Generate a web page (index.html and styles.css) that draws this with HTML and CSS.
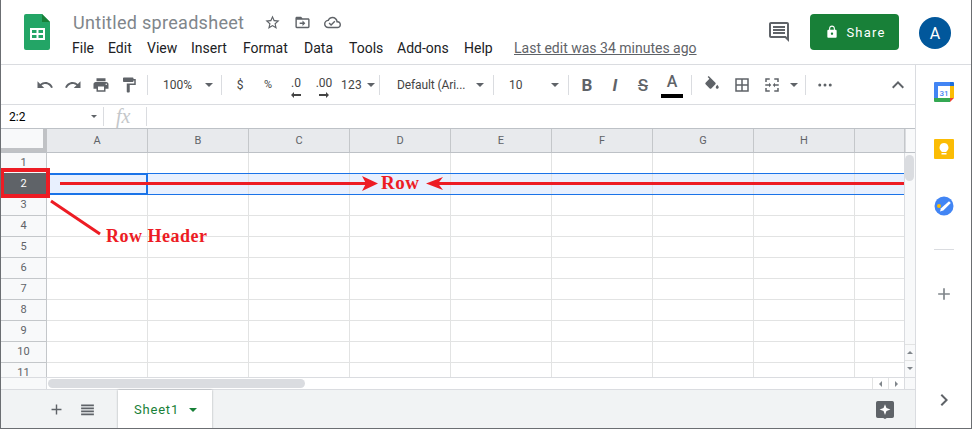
FILE: index.html
```html
<!DOCTYPE html>
<html>
<head>
    <meta charset="UTF-8">
    <title>Untitled spreadsheet</title>
    <link rel="stylesheet" href="styles.css">
</head>
<body>
<div class="app">
    <header class="header">
        <svg class="logo" viewBox="0 0 26 36"><path fill="#23a566" d="M2 0h16l8 8v26a2 2 0 0 1-2 2H2a2 2 0 0 1-2-2V2a2 2 0 0 1 2-2z"/><path fill="#188038" d="M18 0l8 8h-8z"/><path fill="#fff" d="M6 14h15v12H6zm2 2v3h4.500v-3zm6.500 0v3H19v-3zM8 21v3h4.500v-3zm6.500 0v3H19v-3z" fill-rule="evenodd"/></svg>
        <div class="doc">
            <div class="title-row">
                <span class="title">Untitled spreadsheet</span>
                <svg class="title-icon first" viewBox="0 0 24 24"><path d="M22 9.240l-7.190-.620L12 2 9.190 8.630 2 9.240l5.460 4.730L5.820 21 12 17.270 18.180 21l-1.630-7.030L22 9.240zM12 15.400l-3.760 2.270 1-4.280-3.320-2.880 4.380-.380L12 6.100l1.710 4.040 4.380.380-3.320 2.880 1 4.280L12 15.400z"/></svg>
                <svg class="title-icon" viewBox="0 0 24 24"><path d="M20 6h-8l-2-2H4c-1.100 0-2 .9-2 2v12c0 1.100.9 2 2 2h16c1.100 0 2-.9 2-2V8c0-1.100-.9-2-2-2zm0 12H4V8h16v10zm-8-1l4-4-4-4v3H8v2h4v3z"/></svg>
                <svg class="title-icon" viewBox="0 0 24 24"><path d="M19.350 10.040C18.670 6.590 15.640 4 12 4 9.110 4 6.600 5.640 5.350 8.040 2.340 8.360 0 10.910 0 14c0 3.310 2.690 6 6 6h13c2.760 0 5-2.240 5-5 0-2.640-2.050-4.780-4.650-4.960zM19 18H6c-2.210 0-4-1.790-4-4s1.790-4 4-4h.71C7.370 7.690 9.480 6 12 6c3.040 0 5.500 2.460 5.500 5.500v.5H19c1.660 0 3 1.340 3 3s-1.340 3-3 3zm-9-3.820l-2.090-2.090L6.500 13.500 10 17l6.010-6.010-1.410-1.410z"/></svg>
            </div>
            <nav class="menu">
                <span>File</span><span>Edit</span><span>View</span><span>Insert</span><span>Format</span><span>Data</span><span>Tools</span><span>Add-ons</span><span>Help</span>
                <a class="last-edit">Last edit was 34 minutes ago</a>
            </nav>
        </div>
        <svg class="comment" viewBox="0 0 24 24"><path d="M21.990 4c0-1.100-.89-2-1.990-2H4c-1.100 0-2 .9-2 2v12c0 1.100.9 2 2 2h14l4 4-.01-18zM20 4v13.170L18.830 16H4V4h16zM6 12h12v2H6zm0-3h12v2H6zm0-3h12v2H6z"/></svg>
        <button class="share">
            <svg viewBox="0 0 24 24"><path d="M18 8h-1V6c0-2.760-2.240-5-5-5S7 3.240 7 6v2H6c-1.100 0-2 .9-2 2v10c0 1.100.9 2 2 2h12c1.100 0 2-.9 2-2V10c0-1.100-.9-2-2-2zm-6 9c-1.100 0-2-.9-2-2s.9-2 2-2 2 .9 2 2-.9 2-2 2zm3.100-9H8.900V6c0-1.710 1.390-3.100 3.100-3.100 1.710 0 3.100 1.390 3.100 3.100v2z"/></svg>
            Share
        </button>
        <div class="avatar">A</div>
    </header>

    <div class="content">
        <main class="main">
            <div class="toolbar">
                <span class="tool"><svg viewBox="0 0 24 24"><path d="M12.500 8c-2.650 0-5.050.99-6.900 2.600L2 7v9h9l-3.620-3.620c1.390-1.160 3.160-1.880 5.120-1.880 3.540 0 6.550 2.310 7.600 5.500l2.370-.78C21.080 11.030 17.150 8 12.500 8z"/></svg></span>
                <span class="tool"><svg viewBox="0 0 24 24"><path d="M18.400 10.600C16.550 8.990 14.150 8 11.500 8c-4.650 0-8.580 3.030-9.960 7.220L3.900 16c1.050-3.190 4.050-5.500 7.600-5.500 1.950 0 3.730.72 5.120 1.880L13 16h9V7l-3.600 3.600z"/></svg></span>
                <span class="tool"><svg viewBox="0 0 24 24"><path d="M19 8H5c-1.660 0-3 1.340-3 3v6h4v4h12v-4h4v-6c0-1.660-1.340-3-3-3zm-3 11H8v-5h8v5zm3-7c-.55 0-1-.45-1-1s.45-1 1-1 1 .45 1 1-.45 1-1 1zm-1-9H6v4h12V3z"/></svg></span>
                <span class="tool"><svg viewBox="0 0 24 24"><path d="M18 4V3c0-.55-.45-1-1-1H5c-.55 0-1 .45-1 1v4c0 .55.45 1 1 1h12c.55 0 1-.45 1-1V6h1v4H9v11c0 .55.45 1 1 1h2c.55 0 1-.45 1-1v-9h8V4h-3z"/></svg></span>
                <span class="sep sep-first"></span>
                <span class="select select-zoom">100%<i class="caret"></i></span>
                <span class="sep"></span>
                <span class="tool tool-gap text">$</span>
                <span class="tool text small">%</span>
                <span class="tool text dec">.0<svg viewBox="0 0 10 6"><path d="M0 3l3-3v2h7v2H3v2z"/></svg></span>
                <span class="tool text dec">.00<svg viewBox="0 0 10 6"><path d="M10 3L7 0v2H0v2h7v2z"/></svg></span>
                <span class="select select-num">123<i class="caret"></i></span>
                <span class="sep"></span>
                <span class="select select-font">Default (Ari...<i class="caret"></i></span>
                <span class="sep"></span>
                <span class="select select-size">10<i class="caret"></i></span>
                <span class="sep"></span>
                <span class="tool glyph bold tool-gap">B</span>
                <span class="tool glyph italic">I</span>
                <span class="tool glyph strike">S</span>
                <span class="tool color">A<i class="swatch"></i></span>
                <span class="sep sep-wide"></span>
                <span class="tool"><svg viewBox="0 0 24 24"><path d="M16.560 8.940L7.620 0 6.210 1.410l2.380 2.380-5.150 5.150c-.59.59-.59 1.540 0 2.120l5.500 5.500c.29.29.68.44 1.060.44s.77-.15 1.060-.44l5.500-5.500c.59-.58.59-1.530 0-2.120zM19 11.500s-2 2.170-2 3.500c0 1.100.9 2 2 2s2-.9 2-2c0-1.330-2-3.500-2-3.500z"/></svg></span>
                <span class="tool tool-pair"><svg viewBox="0 0 24 24"><path d="M3 3v18h18V3H3zm8 16H5v-6h6v6zm0-8H5V5h6v6zm8 8h-6v-6h6v6zm0-8h-6V5h6v6z"/></svg></span>
                <span class="tool tool-pair"><svg viewBox="0 0 24 24"><path d="M3 3h6v2H5v3H3zm12 0h6v5h-2V5h-4zM3 16h2v3h4v2H3zm16 0h2v5h-6v-2h4zM3 11h5V9l3 3-3 3v-2H3zm18 0h-5V9l-3 3 3 3v-2h5z"/></svg></span>
                <i class="caret caret-merge"></i>
                <span class="sep sep-merge"></span>
                <span class="tool more"><svg viewBox="0 0 24 24"><circle cx="5" cy="12" r="2"/><circle cx="12" cy="12" r="2"/><circle cx="19" cy="12" r="2"/></svg></span>
                <span class="tool collapse"><svg viewBox="0 0 24 24"><path d="M12 8l-6 6 1.410 1.410L12 10.830l4.590 4.580L18 14z"/></svg></span>
            </div>

            <div class="formula">
                <div class="namebox">2:2<i class="caret caret-small"></i></div>
                <div class="fx">fx</div>
            </div>

            <div class="col-heads">
                <div class="corner"></div>
                <div class="col">A</div><div class="col">B</div><div class="col">C</div><div class="col">D</div><div class="col">E</div><div class="col">F</div><div class="col">G</div><div class="col">H</div><div class="col col-last"></div>
                <div class="scroll-corner"></div>
            </div>

            <div class="sheet">
                <div class="rows">
                    <div class="row"><div class="row-head">1</div><div class="cells"></div></div>
                    <div class="row row-selected"><div class="row-head">2</div><div class="cells"><div class="active-cell"></div></div></div>
                    <div class="row"><div class="row-head">3</div><div class="cells"></div></div>
                    <div class="row"><div class="row-head">4</div><div class="cells"></div></div>
                    <div class="row"><div class="row-head">5</div><div class="cells"></div></div>
                    <div class="row"><div class="row-head">6</div><div class="cells"></div></div>
                    <div class="row"><div class="row-head">7</div><div class="cells"></div></div>
                    <div class="row"><div class="row-head">8</div><div class="cells"></div></div>
                    <div class="row"><div class="row-head">9</div><div class="cells"></div></div>
                    <div class="row"><div class="row-head">10</div><div class="cells"></div></div>
                    <div class="row"><div class="row-head">11</div><div class="cells"></div></div>
                </div>
                <div class="vscroll">
                    <div class="vthumb"></div>
                    <div class="vbtn"><i class="tri tri-up"></i></div>
                    <div class="vbtn"><i class="tri tri-down"></i></div>
                </div>
            </div>

            <div class="hscroll">
                <div class="hscroll-head"></div>
                <div class="htrack"><div class="hthumb"></div></div>
                <div class="hbtn"><i class="tri tri-left"></i></div>
                <div class="hbtn"><i class="tri tri-right"></i></div>
                <div class="scroll-corner"></div>
            </div>

            <div class="tabs">
                <svg class="tab-icon add" viewBox="0 0 24 24"><path d="M19 13h-6v6h-2v-6H5v-2h6V5h2v6h6z"/></svg>
                <svg class="tab-icon list" viewBox="0 0 24 24"><path d="M3 5h18v2.400H3zm0 4.200h18v2.400H3zm0 4.200h18v2.400H3zm0 4.200h18V20H3z"/></svg>
                <div class="tab">Sheet1<i class="caret caret-green"></i></div>
                <svg class="explore" viewBox="0 0 20 20"><path fill="#5f6368" d="M2 0h16a2 2 0 0 1 2 2v15a2 2 0 0 1-2 2h-6l-2 1-2-1H2a2 2 0 0 1-2-2V2a2 2 0 0 1 2-2z"/><path fill="#fff" d="M10 3.500l1.600 4.400 4.400 1.600-4.400 1.600L10 15.500l-1.600-4.400L4 9.500l4.400-1.600z"/></svg>
            </div>
        </main>

        <aside class="side">
            <svg class="addon" viewBox="0 0 20 20"><path fill="#fff" d="M4 4h12v12H4z"/><path fill="#4285f4" d="M1 0h15v4H4v12H0V1a1 1 0 0 1 1-1z"/><path fill="#1e6fdc" d="M16 0h3a1 1 0 0 1 1 1v3h-4z"/><path fill="#fbbc04" d="M16 4h4v12h-4z"/><path fill="#34a853" d="M0 16h16v4H1a1 1 0 0 1-1-1z"/><path fill="#ea4335" d="M16 16h4l-4 4z"/><text class="cal-text" x="10" y="13.500">31</text></svg>
            <svg class="addon" viewBox="0 0 20 20"><path fill="#fbbc04" d="M1 0h18a1 1 0 0 1 1 1v18a1 1 0 0 1-1 1H1a1 1 0 0 1-1-1V1a1 1 0 0 1 1-1z"/><path fill="#fff" d="M10 4a4.500 4.500 0 0 1 2.500 8.200V13h-5v-.8A4.500 4.500 0 0 1 10 4zM7.500 14h5v1.500h-5z"/></svg>
            <svg class="addon" viewBox="0 0 20 20"><circle cx="10" cy="10" r="9.500" fill="#4285f4"/><path fill="#fff" d="M15 5.200l1.800 1.800-7.500 7.500-3.300 1 1-3.300z"/><circle cx="5" cy="10" r="2" fill="#fbbc04"/></svg>
            <div class="side-sep"></div>
            <svg class="side-add" viewBox="0 0 24 24"><path d="M19 13h-6v6h-2v-6H5v-2h6V5h2v6h6z"/></svg>
            <svg class="side-toggle" viewBox="0 0 24 24"><path d="M10 6L8.590 7.410 13.170 12l-4.580 4.590L10 18l6-6z"/></svg>
        </aside>
    </div>

    <!-- red annotations drawn on top of the screenshot -->
    <svg class="marks" viewBox="0 0 972 429">
        <rect x="2" y="170" width="46" height="26" fill="none" stroke="#ed1c24" stroke-width="4"/>
        <path fill="none" stroke="#ed1c24" stroke-width="3" d="M60 183.500H370M432 183.500H904M51 201L100 234"/>
        <path fill="#ed1c24" d="M362 176l16 7.500-16 7.500 4-7.500zM443 177l-17 6.500 17 6.500-5-6.500z"/>
    </svg>
    <span class="note note-row">Row</span>
    <span class="note note-header">Row Header</span>
</div>
</body>
</html>
```

FILE: styles.css
```css
* {
    box-sizing: border-box;
}

body {
    margin: 0;
    font-family: Roboto, Arial, sans-serif;
    background-color: #fff;
}

svg {
    display: block;
    fill: #5f6368;
}

.app {
    position: relative;
    width: 972px;
    height: 429px;
    overflow: hidden;
    display: flex;
    flex-direction: column;
    border-left: 1px solid #6b6e72;
    border-right: 1px solid #6b6e72;
    border-bottom: 1px solid #6b6e72;
}

/* header */
.header {
    height: 65px;
    flex: none;
    display: flex;
    align-items: flex-start;
    border-bottom: 1px solid #dadce0;
}

.logo {
    width: 26px;
    height: 36px;
    margin: 14px 0 0 23px;
    flex: none;
}

.doc {
    margin-left: 22px;
    width: 696px;
}

.title-row {
    display: flex;
    align-items: center;
    height: 22px;
    margin-top: 11px;
    margin-left: 1px;
}

.title {
    font-size: 18px;
    color: #80868b;
    width: 191px;
    letter-spacing: 0.3px;
}

.title-icon {
    width: 17px;
    height: 17px;
    margin-right: 13px;
}

.menu {
    display: flex;
    height: 18px;
    margin-top: 6px;
    font-size: 14px;
    line-height: 18px;
    color: #202124;
}

.menu span:nth-child(1) { width: 36px; }
.menu span:nth-child(2) { width: 39px; }
.menu span:nth-child(3) { width: 44px; }
.menu span:nth-child(4) { width: 52px; }
.menu span:nth-child(5) { width: 61px; }
.menu span:nth-child(6) { width: 45px; }
.menu span:nth-child(7) { width: 48px; }
.menu span:nth-child(8) { width: 67px; }
.menu span:nth-child(9) { width: 50px; }

.last-edit {
    color: #5f6368;
    text-decoration: underline;
    white-space: nowrap;
}

.comment {
    width: 24px;
    height: 24px;
    margin: 20px 0 0 -1px;
    flex: none;
}

.share {
    width: 89px;
    height: 36px;
    margin: 14px 0 0 19px;
    flex: none;
    display: flex;
    align-items: center;
    justify-content: center;
    gap: 7px;
    padding-right: 4px;
    border: none;
    border-radius: 4px;
    background-color: #188038;
    color: #fff;
    font-family: Roboto, Arial, sans-serif;
    font-size: 13px;
    letter-spacing: 1.2px;
}

.share svg {
    width: 14px;
    height: 14px;
    fill: #fff;
}

.avatar {
    width: 32px;
    height: 32px;
    margin: 17px 0 0 20px;
    flex: none;
    border-radius: 50%;
    background-color: #01579b;
    color: #fff;
    font-size: 16px;
    line-height: 33px;
    text-align: center;
}

/* main + side panel */
.content {
    flex: 1;
    display: flex;
    min-height: 0;
}

.main {
    width: 914px;
    display: flex;
    flex-direction: column;
}

.side {
    width: 56px;
    border-left: 1px solid #dadce0;
    display: flex;
    flex-direction: column;
    align-items: center;
    padding-left: 1px;
}

/* toolbar */
.toolbar {
    height: 40px;
    flex: none;
    display: flex;
    align-items: center;
    padding-left: 30px;
    border-bottom: 1px solid #dadce0;
    font-size: 12px;
    color: #444;
}

.tool {
    width: 28px;
    height: 24px;
    flex: none;
    display: flex;
    align-items: center;
    justify-content: center;
    position: relative;
}

.tool svg {
    width: 18px;
    height: 18px;
}

.tool-gap {
    margin-left: 4px;
}

.tool-pair {
    margin-left: 2px;
}

.sep {
    width: 1px;
    height: 20px;
    flex: none;
    background-color: #dadce0;
}

.sep-first {
    margin-left: 4px;
}

.sep-wide {
    margin-left: 5px;
    margin-right: 6px;
}

.sep-merge {
    margin-left: 7px;
    margin-right: 2px;
}

.text {
    font-size: 12px;
}

.small {
    font-size: 11px;
}

.dec {
    align-items: flex-start;
    padding-top: 3px;
    font-size: 12px;
}

.dec svg {
    position: absolute;
    left: 9px;
    bottom: -1px;
    width: 10px;
    height: 6px;
    fill: #444;
}

.select {
    display: flex;
    align-items: center;
    justify-content: space-between;
    height: 24px;
    flex: none;
}

.select-zoom {
    width: 73px;
    padding: 0 8px 0 15px;
}

.select-num {
    width: 38px;
    margin-left: 3px;
    padding-right: 4px;
    letter-spacing: 0.3px;
}

.select-font {
    width: 113px;
    padding: 0 9px 0 17px;
    letter-spacing: -0.1px;
}

.select-size {
    width: 74px;
    padding: 0 9px 0 15px;
}

.caret {
    width: 0;
    height: 0;
    flex: none;
    border-left: 4px solid transparent;
    border-right: 4px solid transparent;
    border-top: 4px solid #5f6368;
}

.caret-merge {
    margin-left: 4px;
}

.glyph {
    font-size: 17px;
    color: #5f6368;
}

.bold {
    font-weight: 700;
}

.italic {
    font-style: italic;
    font-weight: 700;
    font-size: 17px;
}

.strike {
    font-weight: 500;
    text-decoration: line-through;
}

.color {
    font-size: 16px;
    font-weight: 500;
    color: #5f6368;
    align-items: flex-start;
    line-height: 18px;
    margin-left: 1px;
}

.swatch {
    position: absolute;
    left: 3px;
    bottom: -1px;
    width: 22px;
    height: 4px;
    background-color: #000;
}

.more {
    margin-left: 3px;
}

.collapse {
    margin-left: auto;
    margin-right: 3px;
}

.collapse svg {
    width: 24px;
    height: 24px;
}

/* formula bar */
.formula {
    height: 24px;
    flex: none;
    display: flex;
    align-items: center;
    border-bottom: 1px solid #bdc1c6;
}

.namebox {
    width: 103px;
    height: 19px;
    padding: 0 6px 0 8px;
    display: flex;
    align-items: center;
    justify-content: space-between;
    border-right: 1px solid #dadce0;
    font-size: 12px;
    color: #000;
}

.caret-small {
    border-left-width: 3px;
    border-right-width: 3px;
    border-top-width: 3px;
}

.fx {
    width: 43px;
    height: 19px;
    border-right: 1px solid #dadce0;
    font-family: "Liberation Serif", serif;
    font-style: italic;
    font-size: 20px;
    line-height: 18px;
    padding-left: 12px;
    color: #c4c7ca;
}

/* column headers */
.col-heads {
    height: 24px;
    flex: none;
    display: flex;
    background-color: #e8eaed;
    border-bottom: 1px solid #bdc1c6;
    font-size: 11px;
    color: #5f6368;
}

.corner {
    width: 46px;
    flex: none;
    background-color: #f8f9fa;
    border-right: 4px solid #c0c2c5;
    border-bottom: 4px solid #c0c2c5;
}

.col {
    width: 101px;
    flex: none;
    border-right: 1px solid #c4c7ca;
    text-align: center;
    line-height: 23px;
}

.col-last {
    width: 50px;
}

.scroll-corner {
    width: 11px;
    flex: none;
    background-color: #f8f9fa;
    border-left: 1px solid #dadce0;
}

/* grid */
.sheet {
    height: 224px;
    flex: none;
    display: flex;
}

.rows {
    width: 903px;
    height: 224px;
    overflow: hidden;
}

.row {
    height: 21px;
    display: flex;
}

.row-head {
    width: 46px;
    flex: none;
    background-color: #f8f9fa;
    border-right: 1px solid #c4c7ca;
    border-bottom: 1px solid #c4c7ca;
    text-align: center;
    font-size: 11px;
    line-height: 20px;
    color: #5f6368;
}

.cells {
    flex: 1;
    border-bottom: 1px solid #e2e3e3;
    background-image: repeating-linear-gradient(to right, transparent 0, transparent 100px, #e2e3e3 100px, #e2e3e3 101px);
}

.row-selected {
    margin-top: -1px;
    height: 22px;
}

.row-selected .row-head {
    background-color: #5f6368;
    color: #fff;
    line-height: 22px;
}

.row-selected .cells {
    background-color: #e8f0fe;
    border-top: 1px solid #1a73e8;
    border-bottom: 1px solid #1a73e8;
}

.active-cell {
    width: 101px;
    height: 20px;
    border: 2px solid #1a73e8;
    border-top-width: 1px;
    border-bottom-width: 1px;
    background-color: #e8f0fe;
}

/* scrollbars */
.vscroll {
    width: 11px;
    flex: none;
    display: flex;
    flex-direction: column;
    background-color: #f8f9fa;
    border-left: 1px solid #dadce0;
}

.vthumb {
    width: 9px;
    height: 26px;
    margin: 2px 0 163px 0;
    border-radius: 5px;
    background-color: #dadce0;
}

.vbtn {
    height: 16px;
    display: flex;
    align-items: center;
    justify-content: center;
    border-top: 1px solid #e2e3e3;
}

.tri {
    width: 0;
    height: 0;
    display: block;
}

.tri-up {
    border-left: 3px solid transparent;
    border-right: 3px solid transparent;
    border-bottom: 3px solid #80868b;
}

.tri-down {
    border-left: 3px solid transparent;
    border-right: 3px solid transparent;
    border-top: 3px solid #80868b;
}

.tri-left {
    border-top: 3px solid transparent;
    border-bottom: 3px solid transparent;
    border-right: 3px solid #80868b;
}

.tri-right {
    border-top: 3px solid transparent;
    border-bottom: 3px solid transparent;
    border-left: 3px solid #80868b;
}

.hscroll {
    height: 12px;
    flex: none;
    display: flex;
    border-top: 1px solid #dadce0;
    background-color: #fff;
}

.hscroll-head {
    width: 46px;
    flex: none;
    background-color: #f8f9fa;
    border-right: 1px solid #dadce0;
}

.htrack {
    flex: 1;
}

.hthumb {
    width: 257px;
    height: 9px;
    margin: 1px 0 0 1px;
    border-radius: 5px;
    background-color: #dadce0;
}

.hbtn {
    width: 16px;
    flex: none;
    display: flex;
    align-items: center;
    justify-content: center;
    border-left: 1px solid #e2e3e3;
}

/* sheet tabs */
.tabs {
    flex: 1;
    display: flex;
    align-items: center;
    background-color: #f1f3f4;
    border-top: 1px solid #dadce0;
}

.tab-icon {
    width: 17px;
    height: 17px;
    flex: none;
}

.add {
    margin-left: 47px;
}

.list {
    margin-left: 14px;
}

.tab {
    width: 94px;
    height: 39px;
    margin-left: 22px;
    display: flex;
    align-items: center;
    padding-left: 16px;
    gap: 10px;
    background-color: #fff;
    box-shadow: 0 0 2px rgba(60, 64, 67, 0.4);
    font-size: 13px;
    color: #188038;
    letter-spacing: 0.8px;
}

.caret-green {
    border-top-color: #188038;
}

.explore {
    width: 18px;
    height: 20px;
    margin-left: 664px;
    flex: none;
}

/* side panel icons */
.addon {
    width: 20px;
    height: 20px;
    margin-top: 37px;
    flex: none;
}

.addon:first-child {
    margin-top: 17px;
}

.cal-text {
    font-family: Roboto, Arial, sans-serif;
    font-size: 8px;
    font-weight: 500;
    fill: #4285f4;
    text-anchor: middle;
}

.side-sep {
    width: 20px;
    height: 1px;
    margin-top: 33px;
    background-color: #dadce0;
}

.side-add {
    width: 20px;
    height: 20px;
    margin-top: 34px;
    fill: #80868b;
}

.side-toggle {
    width: 24px;
    height: 24px;
    margin-top: 84px;
}

/* annotations */
.marks {
    position: absolute;
    left: -1px;
    top: 0;
    width: 972px;
    height: 429px;
    pointer-events: none;
}

.note {
    position: absolute;
    font-family: "Liberation Serif", serif;
    font-weight: 700;
    color: #ed1c24;
    white-space: nowrap;
}

.note-row {
    left: 380px;
    top: 172px;
    font-size: 19px;
    letter-spacing: 0.5px;
}

.note-header {
    left: 105px;
    top: 226px;
    font-size: 18px;
    letter-spacing: 0.5px;
}
```
